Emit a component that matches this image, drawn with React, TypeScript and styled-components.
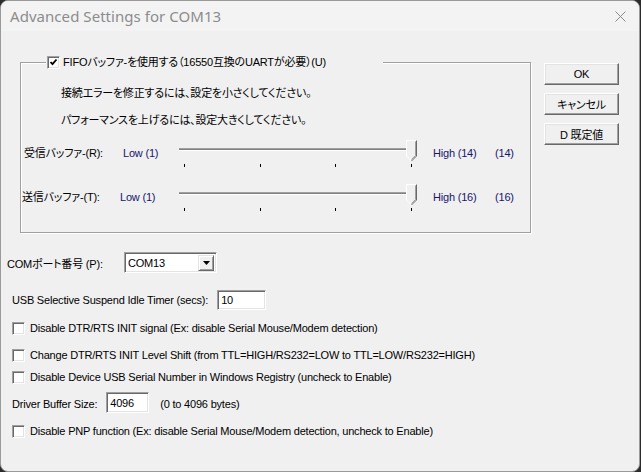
import React from 'react';
import styled, { createGlobalStyle } from 'styled-components';

const FONT = `"Liberation Sans", "Noto Sans CJK JP", sans-serif`;

const Global = createGlobalStyle`
  html, body { margin: 0; padding: 0; background: #2b2b2b; }
  body { width: 641px; height: 472px; overflow: hidden; }
`;

const Window = styled.div`
  box-sizing: border-box;
  width: 640px;
  height: 472px;
  background: #f0f0f0;
  border: 1px solid #9a9a9a;
  border-radius: 8px;
  overflow: hidden;
  display: flex;
  flex-direction: column;
  font-family: ${FONT};
  font-size: 11px;
  letter-spacing: -0.2px;
  font-feature-settings: "palt";
  color: #000;
`;

const TitleBar = styled.div`
  height: 30px;
  flex: none;
  background: #f3f3f3;
  display: flex;
  align-items: center;
  justify-content: space-between;
  padding: 0 13px 0 9px;
`;

const Title = styled.div`
  font-family: "Noto Sans", "Open Sans", sans-serif;
  font-size: 15px;
  letter-spacing: 0.05px;
  color: #8c8c8c;
  line-height: 20px;
`;

const Body = styled.div`
  display: flex;
  flex-direction: column;
`;

const TopArea = styled.div`
  display: flex;
  align-items: flex-start;
  padding-top: 24px;
`;

const Group = styled.fieldset`
  box-sizing: border-box;
  margin: 0 0 0 19px;
  padding: 0 0 20px 0;
  width: 511px;
  min-width: 0;
  border: 1px solid #a0a0a0;
  box-shadow: inset 1px 1px 0 #fff, 1px 1px 0 #fff;
`;

const Legend = styled.legend`
  box-sizing: border-box;
  width: 337px;
  height: 14px;
  margin-left: 25px;
  padding: 0 0 0 1px;
  background: #f0f0f0;
  display: flex;
  align-items: center;
  gap: 3px;
  line-height: 14px;
`;

const Note = styled.div<{ $top: number }>`
  margin-top: ${(p) => p.$top}px;
  padding-left: 40px;
  line-height: 14px;
  height: 14px;
  white-space: nowrap;
`;

const SliderRow = styled.div<{ $top: number }>`
  margin-top: ${(p) => p.$top}px;
  display: grid;
  grid-template-columns: 102px 56px 254px 62px auto;
  height: 28px;
  align-items: start;
  line-height: 14px;
`;

const RowLabel = styled.span<{ $indent: number }>`
  margin-top: 6px;
  padding-left: ${(p) => p.$indent}px;
  white-space: nowrap;
`;

const RangeText = styled.span<{ $shift?: number }>`
  margin-top: 6px;
  margin-left: ${(p) => p.$shift ?? 0}px;
  color: #16166a;
  white-space: nowrap;
`;

const Track = styled.div`
  position: relative;
  width: 239px;
  height: 28px;
`;

const Channel = styled.div`
  margin-top: 8px;
  width: 228px;
  height: 3px;
  box-sizing: border-box;
  border-top: 1px solid #a0a0a0;
  background: #808080;
  border-bottom: 1px solid #fff;
`;

const Ticks = styled.div`
  margin-top: 13px;
  width: 228px;
  padding-left: 5px;
  box-sizing: content-box;
  display: flex;
  justify-content: space-between;
`;

const Tick = styled.span`
  width: 1px;
  height: 3px;
  background: #000;
`;

const Thumb = styled.svg`
  position: absolute;
  left: 227px;
  top: 0;
`;

const ButtonCol = styled.div`
  display: flex;
  flex-direction: column;
  gap: 8px;
  margin-left: 13px;
  padding-top: 8px;
`;

const Button = styled.div`
  box-sizing: border-box;
  width: 75px;
  height: 22px;
  display: flex;
  align-items: center;
  justify-content: center;
  background: #f0f0f0;
  border: 1px solid;
  border-color: #fff #696969 #696969 #fff;
  box-shadow: inset -1px -1px 0 #a0a0a0, inset 1px 1px 0 #e3e3e3;
  font-size: 11px;
`;

const Row = styled.div<{ $top: number; $left: number; $gap?: number }>`
  display: flex;
  align-items: center;
  margin-top: ${(p) => p.$top}px;
  padding-left: ${(p) => p.$left}px;
  gap: ${(p) => p.$gap ?? 0}px;
  line-height: 14px;
  white-space: nowrap;
`;

const FieldLabel = styled.span<{ $w?: number; $ml?: number }>`
  width: ${(p) => (p.$w ? `${p.$w}px` : 'auto')};
  margin-left: ${(p) => p.$ml ?? 0}px;
  padding-top: 2px;
`;

const Sunken = styled.div<{ $w: number; $h: number }>`
  box-sizing: border-box;
  width: ${(p) => p.$w}px;
  height: ${(p) => p.$h}px;
  background: #fff;
  border: 1px solid;
  border-color: #a0a0a0 #fff #fff #a0a0a0;
  box-shadow: inset 1px 1px 0 #696969, inset -1px -1px 0 #e3e3e3;
  display: flex;
  align-items: center;
  padding-left: 3px;
  font-size: 11px;
  line-height: 14px;
`;

const SelectBox = styled(Sunken)`
  justify-content: space-between;
  padding-right: 2px;
`;

const DropButton = styled.span`
  box-sizing: border-box;
  width: 16px;
  height: 16px;
  background: #f0f0f0;
  border: 1px solid;
  border-color: #e3e3e3 #696969 #696969 #e3e3e3;
  box-shadow: inset 1px 1px 0 #fff, inset -1px -1px 0 #a0a0a0;
  display: flex;
  align-items: center;
  justify-content: center;
`;

const Box = styled.span`
  box-sizing: border-box;
  flex: none;
  width: 13px;
  height: 13px;
  background: #fff;
  border: 1px solid;
  border-color: #a0a0a0 #fff #fff #a0a0a0;
  box-shadow: inset 1px 1px 0 #696969, inset -1px -1px 0 #e3e3e3;
  display: flex;
  align-items: center;
  justify-content: center;
`;

function CheckBox({ checked }: { checked?: boolean }) {
  return (
    <Box>
      {checked && (
        <svg width="9" height="9" viewBox="0 0 9 9">
          <polyline points="1.5,4 3.5,6.2 7.5,1.5" fill="none" stroke="#000" strokeWidth="1.8" />
        </svg>
      )}
    </Box>
  );
}

function Slider() {
  return (
    <Track>
      <Channel />
      <Ticks>
        <Tick />
        <Tick />
        <Tick />
        <Tick />
      </Ticks>
      <Thumb width="11" height="22" viewBox="0 0 11 22">
        <polygon points="0.5,0.5 10.5,0.5 10.5,16 5.5,21 0.5,16" fill="#f0f0f0" />
        <polyline points="0.5,16 0.5,0.5 10.5,0.5" fill="none" stroke="#fff" />
        <polyline points="0.5,16 5.5,21" fill="none" stroke="#fff" />
        <polyline points="10.5,0.5 10.5,16 5.5,21" fill="none" stroke="#696969" />
        <polyline points="9.5,1.5 9.5,15.5 5.5,19.5" fill="none" stroke="#a0a0a0" />
      </Thumb>
    </Track>
  );
}

export default function App() {
  return (
    <>
      <Global />
      <Window>
        <TitleBar>
          <Title>Advanced Settings for COM13</Title>
          <svg width="11" height="11" viewBox="0 0 11 11">
            <path d="M0.5 0.5 L10.5 10.5 M10.5 0.5 L0.5 10.5" stroke="#8a8a8a" strokeWidth="1" />
          </svg>
        </TitleBar>
        <Body>
          <TopArea>
            <Group>
              <Legend>
                <CheckBox checked />
                <span>FIFOバッファ-を使用する（16550互換のUARTが必要）(U)</span>
              </Legend>
              <Note $top={17}>接続エラーを修正するには、設定を小さくしてください。</Note>
              <Note $top={13}>パフォーマンスを上げるには、設定大きくしてください。</Note>
              <SliderRow $top={13}>
                <RowLabel $indent={3}>受信バッファ-(R):</RowLabel>
                <RangeText>Low (1)</RangeText>
                <Slider />
                <RangeText>High (14)</RangeText>
                <RangeText>(14)</RangeText>
              </SliderRow>
              <SliderRow $top={16}>
                <RowLabel $indent={1}>送信バッファ-(T):</RowLabel>
                <RangeText $shift={-3}>Low (1)</RangeText>
                <Slider />
                <RangeText>High (16)</RangeText>
                <RangeText>(16)</RangeText>
              </SliderRow>
            </Group>
            <ButtonCol>
              <Button>OK</Button>
              <Button>キャンセル</Button>
              <Button>D 既定値</Button>
            </ButtonCol>
          </TopArea>

          <Row $top={19} $left={6}>
            <FieldLabel $w={117}>COMポート番号 (P):</FieldLabel>
            <SelectBox $w={93} $h={21}>
              <span>COM13</span>
              <DropButton>
                <svg width="7" height="4" viewBox="0 0 7 4">
                  <polygon points="0,0 7,0 3.5,4" fill="#000" />
                </svg>
              </DropButton>
            </SelectBox>
          </Row>

          <Row $top={17} $left={11} $gap={9}>
            <span>USB Selective Suspend Idle Timer (secs):</span>
            <Sunken $w={49} $h={20}>10</Sunken>
          </Row>

          <Row $top={11} $left={11} $gap={5}>
            <CheckBox />
            <span>Disable DTR/RTS INIT signal (Ex: disable Serial Mouse/Modem detection)</span>
          </Row>
          <Row $top={13} $left={11} $gap={5}>
            <CheckBox />
            <span>Change DTR/RTS INIT Level Shift (from TTL=HIGH/RS232=LOW to TTL=LOW/RS232=HIGH)</span>
          </Row>
          <Row $top={8} $left={11} $gap={5}>
            <CheckBox />
            <span>Disable Device USB Serial Number in Windows Registry (uncheck to Enable)</span>
          </Row>
          <Row $top={8} $left={11} $gap={9}>
            <FieldLabel>Driver Buffer Size:</FieldLabel>
            <Sunken $w={43} $h={21}>4096</Sunken>
            <FieldLabel $ml={2}>(0 to 4096 bytes)</FieldLabel>
          </Row>
          <Row $top={11} $left={11} $gap={5}>
            <CheckBox />
            <span>Disable PNP function (Ex: disable Serial Mouse/Modem detection, uncheck to Enable)</span>
          </Row>
        </Body>
      </Window>
    </>
  );
}
